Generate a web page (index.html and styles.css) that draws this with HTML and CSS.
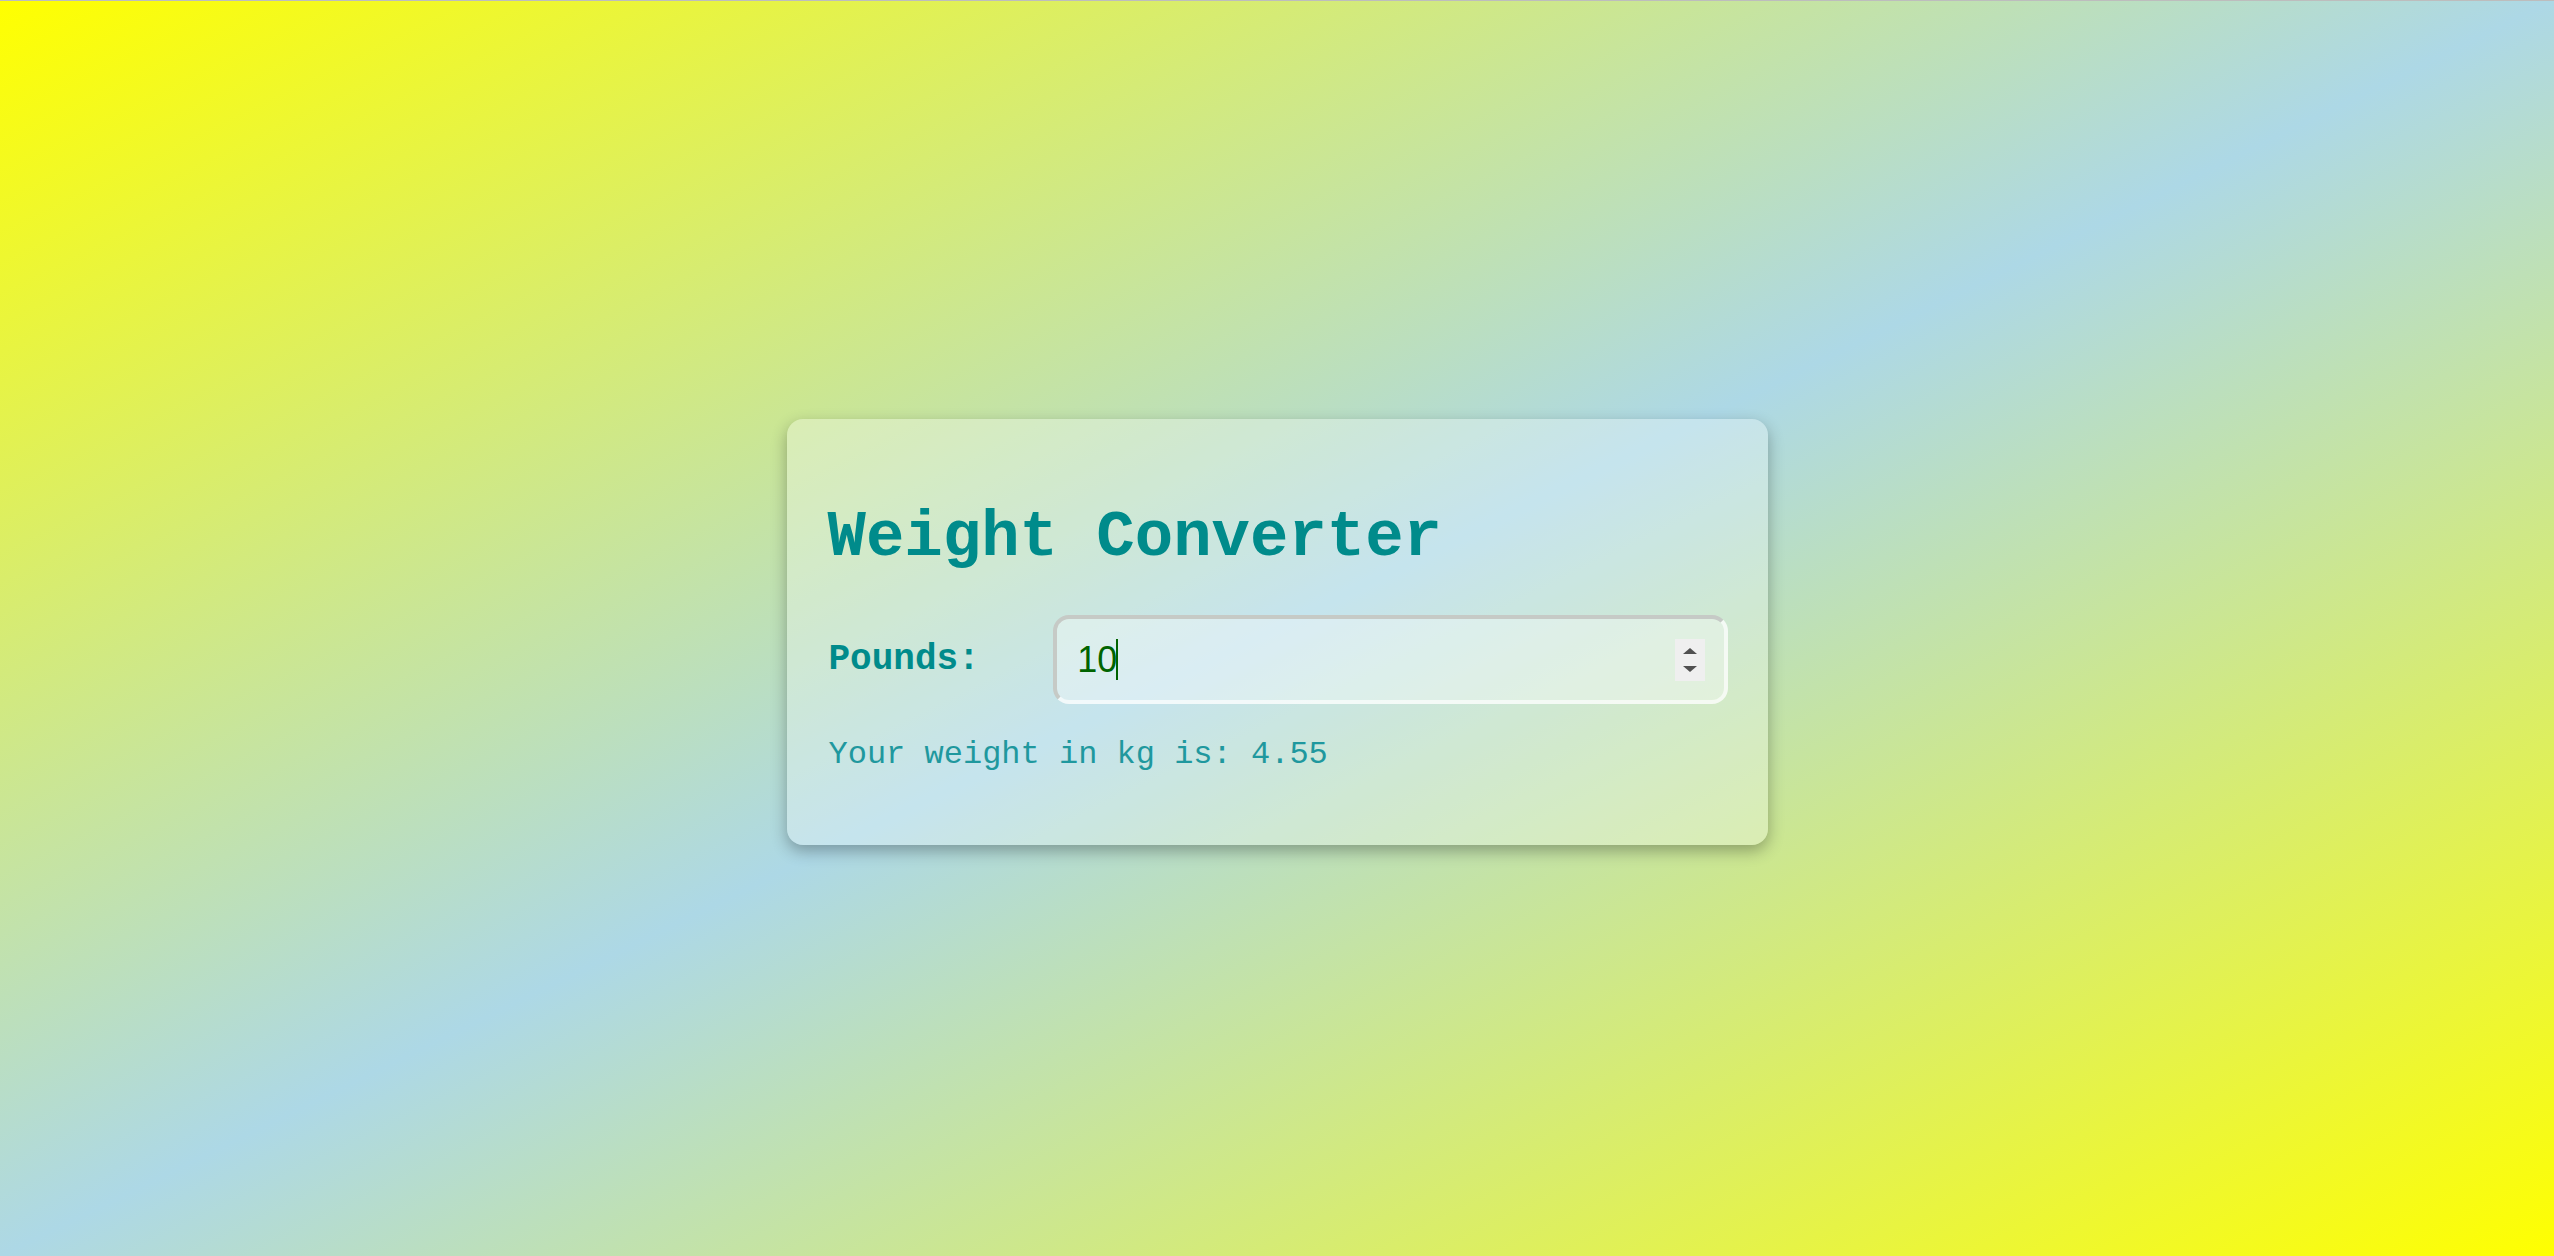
FILE: index.html
```html
<!DOCTYPE html>
<html lang="en">
<head>
<meta charset="utf-8">
<title>Weight Converter</title>
<link rel="stylesheet" href="styles.css">
</head>
<body>
<main class="page">
  <section class="card">
    <h1 class="title">Weight Converter</h1>
    <div class="row">
      <label class="label" for="pounds">Pounds:</label>
      <div class="field">
        <input class="input" id="pounds" type="number" value="10">
        <span class="caret"></span>
        <span class="spinner" aria-hidden="true">
          <span class="tri tri-up"></span>
          <span class="tri tri-down"></span>
        </span>
      </div>
    </div>
    <p class="result">Your weight in kg is: 4.55</p>
  </section>
</main>
</body>
</html>
```
FILE: styles.css
```css
html, body {
  margin: 0;
  padding: 0;
  height: 100%;
}

body {
  background: linear-gradient(to bottom right, #ffff00, #add8e6, #ffff00);
  border-top: 1px solid #bdbdbd;
  box-sizing: border-box;
  overflow: hidden;
}

.page {
  box-sizing: border-box;
  height: 100vh;
  padding-top: 6px;
  display: flex;
  align-items: center;
  justify-content: center;
}

.card {
  box-sizing: border-box;
  width: 981px;
  padding: 40px;
  border-radius: 16px;
  background: rgba(255, 255, 255, 0.3);
  box-shadow: 0 6px 16px rgba(0, 0, 0, 0.3);
  font-family: "Liberation Mono", "Courier New", monospace;
  color: #008b8b;
}

.title {
  font-size: 64px;
  font-weight: bold;
  margin: 43px 0 41px;
  padding-left: 1px;
}

.row {
  display: flex;
  align-items: center;
}

.label {
  width: 25%;
  font-size: 36px;
  font-weight: bold;
  padding-left: 2px;
}

.field {
  position: relative;
  width: 75%;
}

.input {
  box-sizing: border-box;
  display: block;
  width: 100%;
  height: 89px;
  padding: 20px;
  border: 4px solid;
  border-color: #c6cac6 rgba(255, 255, 255, 0.65) rgba(255, 255, 255, 0.65) #c6cac6;
  border-radius: 16px;
  background: rgba(255, 255, 255, 0.35);
  font-family: "Liberation Sans", Arial, sans-serif;
  font-size: 36px;
  color: #006400;
  outline: none;
  -moz-appearance: textfield;
}

.input::-webkit-inner-spin-button,
.input::-webkit-outer-spin-button {
  -webkit-appearance: none;
  margin: 0;
}

.caret {
  position: absolute;
  left: 63px;
  top: 24px;
  width: 2px;
  height: 41px;
  background: #006400;
}

.spinner {
  position: absolute;
  right: 23px;
  top: 24px;
  width: 30px;
  height: 42px;
  background: #efefef;
  display: flex;
  flex-direction: column;
  align-items: center;
  justify-content: center;
  gap: 12px;
}

.tri {
  width: 0;
  height: 0;
  border-left: 7px solid transparent;
  border-right: 7px solid transparent;
}

.tri-up {
  border-bottom: 6px solid #505050;
}

.tri-down {
  border-top: 6px solid #505050;
}

.result {
  margin: 32px 0;
  font-size: 32px;
  color: #1f989e;
  padding-left: 2px;
}
```
